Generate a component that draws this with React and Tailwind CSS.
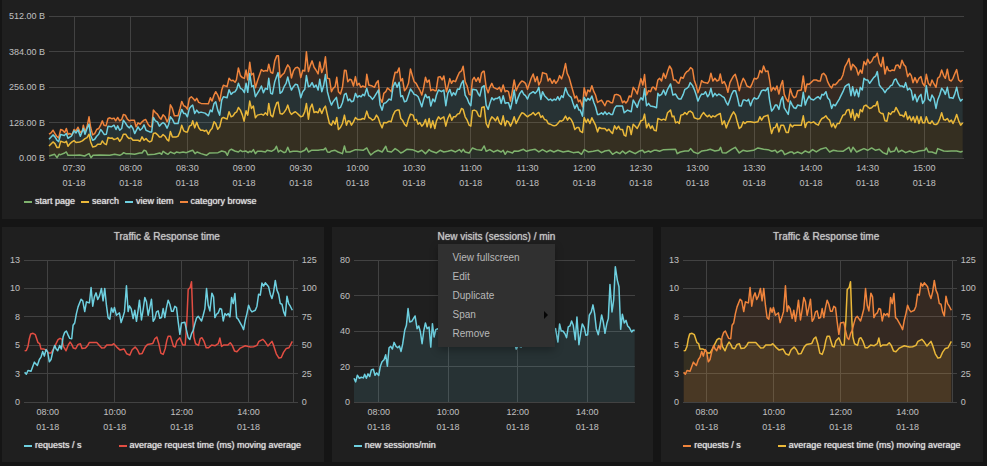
import { useState } from 'react';

const PLOT_HEIGHT = 142;

const COLORS = {
    green: '#7EB26D',
    yellow: '#EAB839',
    cyan: '#6ED0E0',
    orange: '#EF843C',
    red: '#E24D42',
};

// traces come in chunks, each one with its own x origin
const trace = (...chunks) =>
    chunks.flatMap(([origin, points]) =>
        points.trim().split(/\s+/).map((pair) => {
            const [x, y] = pair.split(',').map(Number);
            return [x + origin, y];
        })
    );

const categoryBrowse = trace(
    [0, `148,402 154,398 160,390 166,400 171,408 177,413 183,388 189,390 195,397 200,385 205,402 211,400 217,404 223,388 229,392 235,381 242,397 248,392 251,375 256,395 262,380 268,350 273,382 279,404 285,400 291,388 297,385 303,374 308,362 313,375 319,377 325,355 331,353 337,356 343,354 348,362 354,352 360,362 366,358 371,343 377,345 383,357 389,362 394,360 404,360 409,380 415,368 421,372 427,365 433,360 438,358 445,372 450,378 456,380 461,330 467,337 473,342 479,352 484,357 490,344 496,350 502,365 507,355 512,314 518,325 524,347 535,347 541,325 546,304 552,317 558,320 563,327 569,295 575,290 581,296 586,302 591,295 597,307 604,310 626,311 632,293 637,303 643,285 648,275 654,285 660,303 666,270 671,256 682,260 688,235 694,242 700,241 706,247 710,240 716,204 722,227 728,233 734,235 739,210 744,240 750,187 755,225 761,220 767,263 773,243 779,226 785,209 791,214 797,212 803,213 807,193 813,217 819,220 825,183 831,168 836,168 841,233 847,225 853,220 859,205 864,195 870,203 875,234 881,213 887,204 893,202 898,206 903,233 909,211 915,213 920,156 926,215 931,198 937,183 943,202 949,211 955,222 960,186 966,218 972,202 977,171 983,235 989,236`],
    [990, `5,275 10,265 16,260 21,232 26,275 32,282 38,262 44,211 49,212 54,245 60,238 65,240 71,258 77,230 82,256 88,250 93,262 99,258 107,262 111,223 117,255 125,257 134,262 140,248 145,242 151,295 157,307 162,280 168,275 173,264 178,268 185,275 190,243 196,217 202,218 208,204 213,243 218,236 224,272 230,265 236,250 242,207 248,228 253,245 259,250 264,260 270,270 276,285 281,265 287,232 292,247 298,240 303,272 309,268 315,272 319,272 325,232 331,230 337,240 342,228 350,275 353,265 360,236 365,250 370,242 377,245 383,230 389,217 395,213 400,199 406,245 412,258 418,283 423,285 428,240 433,232 439,244 445,233 450,247 455,220 460,214 463,214 469,262 475,278 480,262 486,250 491,262 497,265 503,268 509,262 514,275 520,255 526,275 531,272 536,275 542,303 548,270 553,240 559,272 564,260 570,250 576,243 581,245 587,250 593,268 599,250 604,235 610,222 616,245 622,230 627,255 633,243 638,218 650,222 655,243 660,235 667,250 673,240 678,250 684,242 689,227 695,237 700,222 707,191 712,220 718,233 724,255 729,272 735,294 740,288 746,305 751,300 758,320 763,263 769,288 774,270 780,275 786,257 792,275 797,285 803,307 809,303 815,300 820,308 825,317 831,303 837,303 843,308 848,308 854,285 860,283 866,285 871,288 878,308 883,303 888,309 893,303 898,288 904,290 910,262 916,270 922,282 927,260 933,236 939,255 944,224 950,285 956,272 962,275 967,262 972,262 978,270`],
    [1971, `3,240 8,235 14,243 20,220 26,235 32,215 38,198 44,208 50,240 56,240 62,248 66,250 72,232 79,235 84,222 90,215 95,212 101,203 107,208 112,240 118,257 123,278 129,262 134,242 140,247 146,248 152,250 157,242 162,220 168,243 174,235 180,243 186,240 190,222 196,250 202,245 208,258 213,277 219,248 224,238 230,228 235,223 241,243 247,272 253,250 259,235 264,243 270,258 280,263 286,250 292,235 298,237 303,233 309,212 315,218 320,198 326,215 333,213 338,240 343,273 349,262 355,270 360,258 366,282 372,255 377,242 382,283 388,297 394,305 400,266 406,285 411,293 417,290 422,272 433,270 439,228 445,275 450,252 456,253 462,248 470,240 478,240 484,243 490,243 495,223 500,220 507,228 512,245 518,257 524,264 529,253 535,254 541,248 547,240 552,238 558,225 564,200 570,190 576,176 582,210 587,193 592,198 598,205 604,225 610,210 615,220 621,185 627,195 632,178 638,190 644,185 650,172 656,170 661,160 667,190 673,200 678,172 684,222 690,200 695,212 701,213 706,210 712,212 717,197 723,195 729,205 735,181 741,195 746,200 752,230 758,220 763,227 768,248 774,233 780,248 786,235 792,230 797,250 803,258 808,223 814,250 820,257 825,240 831,252 837,262 842,235 848,230 854,210 860,227 865,235 871,208 877,240 883,243 888,235 893,222 899,209 905,240 911,245 917,240`]
);

const viewItem = trace(
    [0, `148,417 160,404 166,410 172,420 177,424 183,403 194,406 200,400 205,414 215,408 223,392 229,398 235,389 242,408 251,385 256,402 262,385 268,372 273,405 279,420 285,417 291,408 297,402 303,388 308,394 314,403 320,402 325,378 335,380 343,375 349,388 354,377 360,390 366,385 371,360 377,368 383,378 389,383 394,376 400,385 405,400 415,380 421,390 427,385 433,374 439,390 450,395 456,395 461,352 467,362 473,365 479,378 484,372 490,367 496,372 502,384 507,372 512,350 518,357 524,370 535,370 541,345 546,328 552,340 557,340 563,350 569,325 575,318 579,315 585,340 591,330 597,338 604,336 616,339 626,347 632,330 637,335 643,310 648,305 654,330 660,345 666,300 671,290 682,293 688,269 694,283 700,277 706,275 711,267 716,250 722,265 728,268 734,278 739,250 744,277 750,221 756,260 761,257 767,290 773,280 779,270 785,258 791,278 797,265 803,268 807,235 813,280 818,282 825,245 831,228 835,218 841,280 847,275 853,260 859,250 864,231 870,255 875,270 881,260 887,253 893,254 898,270 903,293 909,275 915,268 920,227 926,260 931,258 937,248 943,262 949,255 955,270 960,238 966,275 972,255 977,224 983,275 989,298`],
    [990, `5,315 10,305 20,292 26,325 32,322 38,308 44,283 49,280 55,302 60,297 65,305 71,303 77,280 83,292 88,287 94,290 99,283 104,287 111,265 117,287 122,290 128,298 134,290 140,280 146,270 151,315 157,330 162,310 168,308 173,303 178,297 184,300 190,260 196,247 202,262 208,247 213,290 218,287 224,305 230,303 236,285 242,267 248,275 253,283 259,285 265,290 270,303 276,320 281,300 287,283 292,293 298,290 303,318 309,297 315,305 320,285 326,270 335,275 342,270 348,317 354,280 360,268 366,287 371,278 377,285 383,267 389,268 395,250 400,242 406,285 412,295 418,310 423,317 428,268 440,270 446,283 450,288 456,262 463,257 469,315 475,328 480,310 486,293 492,300 497,295 503,295 509,290 514,310 520,287 526,310 531,308 536,308 542,327 548,300 553,270 559,310 564,295 570,280 576,272 582,283 587,287 593,297 599,282 610,275 616,280 622,273 627,262 633,298 638,275 644,287 650,293 656,300 662,297 667,302 673,297 678,300 684,290 689,300 695,287 700,292 707,263 713,280 718,287 724,292 729,308 735,325 741,313 747,330 751,330 758,348 763,292 769,303 774,295 780,300 786,288 792,307 797,320 803,343 808,343 815,338 820,343 825,335 831,343 837,338 843,343 848,343 854,325 859,318 870,318 878,318 883,338 893,330 904,335 910,300 916,310 922,322 927,305 933,293 939,300 944,266 950,317 956,310 962,318 973,320 980,323`],
    [1971, `3,280 8,287 14,283 20,270 26,285 32,268 41,252 48,285 56,282 62,293 67,297 72,297 79,283 84,268 90,265 95,260 100,248 107,257 112,268 118,285 123,303 129,290 134,282 140,283 146,275 152,290 157,283 162,265 168,290 174,280 180,287 186,282 191,285 197,290 202,293 208,307 213,315 219,298 224,283 230,272 236,272 241,290 247,317 253,318 259,300 264,300 270,303 275,298 281,317 287,300 292,293 298,297 303,295 309,283 314,272 320,270 326,272 333,263 338,300 344,333 350,325 355,315 360,315 366,328 372,300 377,290 382,323 388,333 394,343 400,303 406,315 411,323 417,325 422,315 433,318 439,277 445,315 450,300 456,288 462,297 470,300 478,293 484,290 490,297 495,283 500,285 507,275 512,293 518,300 524,325 529,313 535,317 541,307 547,297 552,287 558,275 564,260 570,255 576,252 582,287 587,260 593,287 599,268 605,290 610,262 616,270 621,235 627,240 632,240 638,250 643,243 650,233 656,228 661,215 667,255 673,263 678,268 684,278 690,268 695,265 701,257 706,255 712,240 717,237 723,250 729,258 735,258 741,262 746,248 752,270 758,265 763,272 768,300 774,283 780,305 786,290 792,283 797,310 803,300 808,257 814,297 820,303 825,285 831,295 837,325 842,300 848,285 854,265 860,272 865,283 871,262 877,293 883,293 888,295 893,283 899,262 905,290 911,303 917,297`]
);

const search = trace(
    [0, `148,437 160,425 166,430 172,442 178,442 183,423 195,427 200,423 205,438 211,430 217,425 223,421 229,427 240,425 248,422 256,415 262,412 268,402 273,425 279,440 288,438 294,432 303,432 308,422 314,430 320,433 325,412 331,414 337,413 343,418 349,416 354,413 360,423 366,415 371,402 378,402 383,410 388,415 394,413 400,420 415,420 421,423 427,410 433,420 439,415 445,422 450,425 456,422 461,400 467,398 473,403 479,410 484,410 490,403 496,408 502,418 507,422 512,394 518,410 530,410 535,408 541,395 546,375 552,392 558,395 563,395 569,378 575,375 579,362 585,383 591,366 597,383 603,390 609,390 615,393 620,390 626,402 632,390 637,385 643,365 648,370 654,387 660,380 666,355 671,352 682,357 688,335 694,350 700,347 706,338 711,335 716,322 722,330 728,345 733,363 739,332 744,345 750,303 755,325 761,318 767,353 773,345 785,342 791,345 797,338 803,345 807,310 813,345 819,350 825,325 831,308 835,306 841,340 847,342 853,337 859,328 864,315 870,335 875,343 881,338 887,335 893,340 898,345 903,350 909,348 915,335 920,310 926,357 931,325 937,312 943,337 949,335 955,338 960,325 966,340 972,325 977,318 983,345 989,370`],
    [990, `5,375 10,362 16,372 21,352 26,388 32,382 38,370 44,345 50,375 55,362 60,363 65,375 71,365 77,352 83,358 93,358 99,355 104,357 111,333 117,352 123,355 128,360 134,357 140,345 145,352 151,370 157,383 162,367 170,368 178,363 184,365 190,345 196,333 202,330 208,330 213,355 218,360 224,372 230,378 236,357 242,342 250,345 254,360 260,358 265,372 270,367 276,378 281,372 287,358 292,380 298,355 303,383 309,362 315,385 320,362 326,350 332,357 337,353 342,350 348,378 354,355 360,342 366,360 371,350 377,350 383,342 389,340 395,325 400,328 406,350 412,360 418,375 423,378 428,332 433,330 440,333 446,347 452,350 456,322 463,320 469,370 475,382 480,362 486,350 492,355 497,362 503,350 509,368 514,373 520,347 526,377 531,362 536,365 542,378 548,365 553,350 559,370 564,360 570,348 576,338 582,340 587,345 593,350 599,345 604,343 610,337 616,345 622,340 627,337 633,352 638,347 644,358 650,360 655,370 661,372 667,375 673,377 679,375 684,370 690,362 695,363 700,360 707,348 713,360 718,352 724,358 729,368 735,388 741,382 747,382 751,393 758,397 763,352 769,367 774,357 780,370 786,353 792,365 797,375 803,395 808,382 815,385 820,385 825,385 831,392 837,387 843,395 848,400 854,377 860,387 866,378 871,388 878,388 883,405 888,408 893,378 899,380 904,403 910,372 916,378 922,385 927,375 933,362 939,360 944,342 950,383 956,370 962,385 967,377 973,390 979,392`],
    [1971, `3,355 8,357 14,360 20,357 26,360 32,338 41,330 46,350 51,348 56,368 62,365 67,370 72,345 79,343 84,337 90,343 95,335 100,333 107,338 112,353 123,357 129,355 134,345 140,337 146,345 152,350 157,345 163,352 168,347 174,350 180,345 190,340 196,373 202,362 208,383 213,370 219,357 224,345 230,335 236,345 241,365 247,385 253,380 259,365 264,370 270,365 281,365 292,367 303,365 309,350 314,360 320,350 333,345 338,370 344,400 350,383 355,382 360,370 366,395 372,375 380,375 388,397 394,397 400,372 406,380 411,375 422,375 433,375 439,347 445,382 450,368 456,365 462,368 470,365 478,372 484,375 490,362 495,355 500,353 507,347 512,355 518,360 524,380 529,370 535,383 541,370 547,370 552,358 558,345 564,343 570,330 576,328 582,352 587,328 593,360 599,340 605,352 610,328 616,335 621,318 627,315 638,325 644,323 650,317 656,317 661,304 667,335 673,340 678,340 684,362 690,363 695,338 701,343 706,335 712,335 717,322 723,333 729,345 735,345 741,350 746,335 752,358 758,348 763,362 769,350 774,367 780,348 786,370 792,350 797,368 803,368 808,350 814,368 820,370 825,362 831,372 837,373 842,370 848,357 854,338 860,358 865,360 871,355 877,365 883,360 888,370 893,360 899,343 905,362 911,375 917,368`]
);

const startPage = trace(
    [0, `148,467 165,462 172,472 178,462 183,463 195,458 200,455 205,465 225,465 240,464 255,467 262,463 268,460 274,472 280,465 300,464 330,465 345,462 360,465 366,462 372,457 378,460 390,460 405,462 420,458 427,458 433,450 439,452 444,463 465,462 480,458 486,462 490,453 497,458 505,462 512,455 524,460 530,455 540,457 550,455 560,457 570,453 579,450 586,460 592,455 604,460 620,465 630,458 655,457 666,452 677,455 683,465 689,450 695,447 705,452 716,455 722,450 728,454 738,452 745,457 750,453 755,455 761,448 767,460 773,453 785,453 797,455 802,450 815,453 825,447 830,438 836,455 842,450 853,457 858,455 864,441 870,455 880,453 892,453 903,455 915,450 920,443 926,455 935,450 945,450 955,450 966,448 972,448 977,443 983,455 989,456`],
    [990, `5,452 16,450 25,455 38,460 44,437 49,455 60,455 77,448 100,450 111,443 117,455 123,464 134,455 145,450 157,455 168,438 173,453 185,455 196,445 204,450 213,458 220,455 231,447 248,448 265,455 276,450 287,460 298,448 303,452 320,458 331,450 342,455 354,453 365,450 377,455 389,448 395,455 400,447 406,455 418,458 428,443 440,448 455,450 463,437 469,453 480,448 491,455 503,450 514,455 520,450 526,462 532,453 548,458 553,452 565,453 581,447 590,453 600,450 616,447 627,455 638,448 650,455 661,450 672,455 684,450 700,455 715,452 730,457 745,455 755,462 763,448 775,455 790,453 805,450 815,457 825,452 838,450 848,462 860,455 870,460 878,452 887,460 899,452 916,460 927,453 938,450 944,457 956,452 962,455 972,450 979,450`],
    [1971, `8,453 20,448 56,447 61,460 70,455 84,452 95,452 101,445 110,455 123,460 135,452 150,450 160,447 174,452 186,450 191,441 196,457 208,458 224,447 235,441 247,458 258,450 270,453 290,450 303,443 320,447 333,448 345,453 355,450 361,457 372,450 377,452 383,463 400,455 406,455 411,460 422,455 434,460 445,452 456,457 467,448 478,455 490,447 507,442 518,455 529,450 541,452 558,453 576,441 582,455 588,441 599,455 610,450 621,445 632,450 644,443 656,450 667,447 678,457 690,462 695,443 700,455 713,452 718,441 724,455 735,450 746,457 758,452 770,457 786,452 803,450 808,443 814,455 825,455 837,460 842,445 860,452 871,453 883,452 899,452 911,455 917,453`]
);

const requests = trace([0, `74,455 79,461 84,450 93,452 103,425 112,435 118,417 123,410 128,393 133,407 138,387 143,395 148,424 153,417 158,395 164,375 168,385 173,391 179,375 184,386 189,350 194,336 199,332 205,346 209,354 215,355 219,315 224,308 229,280 234,260 243,237 248,242 254,274 259,245 264,247 268,248 273,202 278,258 283,230 288,218 293,238 298,228 304,205 309,242 314,205 319,255 324,292 329,297 334,263 339,276 343,262 349,285 358,278 363,307 368,292 373,275 379,197 384,274 388,257 393,265 399,295 404,270 409,303 414,270 418,240 424,299 429,268 434,232 439,245 444,285 449,262 454,237 459,303 464,295 469,275 474,272 479,294 484,292 489,265 494,292 499,262 504,240 509,252 514,273 519,273 524,258 529,262 534,305 539,342 544,308 554,306 559,330 564,352 569,357 574,340 579,330 584,310 589,293 594,288 599,295 604,302 609,285 614,265 619,205 624,255 629,272 635,219 640,230 644,292 649,282 654,278 659,265 664,267 669,302 674,280 679,285 684,280 689,290 694,232 699,250 704,220 709,292 714,297 724,315 730,328 735,300 740,280 745,255 750,268 755,275 765,270 770,258 775,222 780,225 785,189 790,198 795,188 805,200 810,222 815,235 820,215 825,181 830,210 835,222 840,250 845,252 850,275 855,287 860,228 865,250 870,258 876,270`]);

const requestTime = trace([0, `74,391 79,390 84,378 88,355 92,341 99,339 106,343 110,355 114,367 119,370 123,386 132,386 140,390 145,398 153,398 160,385 167,372 174,358 180,354 186,357 190,378 198,391 204,375 210,365 215,372 220,383 227,385 234,372 241,370 246,384 256,383 263,375 268,366 290,366 298,375 305,383 313,382 320,374 335,374 341,370 350,380 360,389 372,386 380,400 389,404 396,388 405,380 412,388 418,401 426,399 435,380 442,372 458,369 464,355 470,350 476,370 482,398 489,402 495,385 500,360 504,348 511,348 516,365 520,378 525,380 530,362 539,352 543,362 548,374 555,374 560,300 564,208 570,202 574,185 578,300 581,350 586,370 595,375 600,355 605,352 611,362 618,382 625,382 634,374 645,376 654,370 659,353 664,378 670,374 683,374 690,367 696,375 703,392 710,394 720,383 735,376 750,380 760,379 770,375 776,363 788,357 795,365 803,377 815,363 820,375 828,400 836,413 843,411 850,395 858,384 866,382 876,363`]);

const newSessions = trace([0, `76,473 81,484 86,464 92,473 98,470 104,472 108,461 113,473 118,460 123,468 128,448 134,446 139,464 144,457 150,465 155,437 160,424 166,418 171,403 176,437 181,382 186,378 191,386 196,366 202,378 207,382 212,377 217,393 222,370 228,330 233,315 238,265 243,305 249,303 254,295 259,287 265,325 270,317 275,335 280,370 285,332 290,308 295,325 301,320 306,380 311,310 316,350 321,328 327,325 340,340 390,325 450,335 500,320 540,345 556,365 562,386 568,376 577,380 585,360 620,340 660,345 680,325 687,365 692,311 697,332 702,332 708,340 713,352 718,320 723,317 728,302 733,315 739,358 744,290 750,373 755,340 760,311 766,322 771,345 776,343 781,285 787,275 792,254 797,280 802,325 808,343 813,315 818,284 823,305 828,339 834,308 838,295 843,193 849,275 854,240 859,140 865,180 870,200 875,327 880,282 886,308 891,300 896,317 901,322 908,335 912,330 917,330`]);

const overview = {
    box: { x: 148, y: 49, w: 2744, h: 424 },
    ticks: ['07:30', '08:00', '08:30', '09:00', '09:30', '10:00', '10:30', '11:00', '11:30', '12:00', '12:30', '13:00', '13:30', '14:00', '14:30', '15:00']
        .map((label, i) => ({ label, x: 223 + i * 170 })),
    left: ['512.00 B', '384.00 B', '256.00 B', '128.00 B', '0.00 B'],
    series: [
        { name: 'start page', color: COLORS.green, points: startPage, fill: true },
        { name: 'search', color: COLORS.yellow, points: search, base: startPage, fill: true },
        { name: 'view item', color: COLORS.cyan, points: viewItem, base: search, fill: true },
        { name: 'category browse', color: COLORS.orange, points: categoryBrowse, base: viewItem, fill: true },
    ],
};

const traffic = (first, second, fill) => ({
    box: { x: 72, y: 120, w: 820, h: 424 },
    ticks: [{ label: '08:00', x: 143 }, { label: '10:00', x: 344 }, { label: '12:00', x: 545 }, { label: '14:00', x: 745 }],
    edge: 881,
    left: ['13', '10', '8', '5', '3', '0'],
    right: ['125', '100', '75', '50', '25', '0'],
    series: [
        { name: 'requests / s', color: first, points: requests, fill },
        { name: 'average request time (ms) moving average', color: second, points: requestTime, fill },
    ],
});

const visits = {
    box: { x: 76, y: 120, w: 841, h: 424 },
    ticks: [{ label: '08:00', x: 150 }, { label: '10:00', x: 358 }, { label: '12:00', x: 567 }, { label: '14:00', x: 775 }],
    left: ['80', '60', '40', '20', '0'],
    series: [{ name: 'new sessions/min', color: COLORS.cyan, points: newSessions, fill: true }],
};

const Chart = ({ data }) => {
    const { box, ticks, left, right, edge, series } = data;
    const percent = (x) => `${((x - box.x) / box.w) * 100}%`;
    const bottom = box.y + box.h;

    const areaOf = ({ points, base }) => {
        const floor = base
            ? [...base].reverse()
            : [[points[points.length - 1][0], bottom], [points[0][0], bottom]];
        return [...points, ...floor].join(' ');
    };

    return (
        <svg className="block w-full h-[142px] overflow-visible text-[9px] fill-[#c0c0c0]">
            <g stroke="#424242" shapeRendering="crispEdges">
                {left.map((label, i) => {
                    const y = (i / (left.length - 1)) * PLOT_HEIGHT;
                    return <line key={label} x1="0" x2="100%" y1={y} y2={y} />;
                })}
                {ticks.map(({ label, x }) => (
                    <line key={label} x1={percent(x)} x2={percent(x)} y1="0" y2={PLOT_HEIGHT} />
                ))}
                {edge && <line x1={percent(edge)} x2={percent(edge)} y1="0" y2={PLOT_HEIGHT} />}
            </g>
            <svg width="100%" height={PLOT_HEIGHT} viewBox={`${box.x} ${box.y} ${box.w} ${box.h}`} preserveAspectRatio="none" overflow="visible">
                {series.filter((s) => s.fill).map((s) => (
                    <polygon key={s.name} points={areaOf(s)} fill={s.color} fillOpacity="0.11" />
                ))}
                {[...series].reverse().map((s) => (
                    <polyline key={s.name} points={s.points.join(' ')} fill="none" stroke={s.color} strokeWidth="1.5" strokeLinejoin="round" vectorEffect="non-scaling-stroke" />
                ))}
            </svg>
            {left.map((label, i) => (
                <text key={label} x="-4" y={(i / (left.length - 1)) * PLOT_HEIGHT + 3} textAnchor="end">{label}</text>
            ))}
            {right && (
                <svg x="100%" overflow="visible">
                    {right.map((label, i) => (
                        <text key={label} x="4" y={(i / (right.length - 1)) * PLOT_HEIGHT + 3}>{label}</text>
                    ))}
                </svg>
            )}
            {ticks.map(({ label, x }) => (
                <g key={label} textAnchor="middle">
                    <text x={percent(x)} y={PLOT_HEIGHT + 13}>{label}</text>
                    <text x={percent(x)} y={PLOT_HEIGHT + 28}>01-18</text>
                </g>
            ))}
        </svg>
    );
};

const Legend = ({ series, wide }) => (
    <div className={`mt-[37px] flex pl-[22px] ${wide ? 'gap-[37px]' : 'gap-[6px]'}`}>
        {series.map((s) => (
            <button key={s.name} type="button" className="flex items-center gap-[3px] whitespace-nowrap text-[9px] leading-3 text-[#e0e0e0] [text-shadow:0_0_1px_#e0e0e0]">
                <svg className="mt-px h-[2px] w-2" aria-hidden="true">
                    <rect width="8" height="2" fill={s.color} />
                </svg>
                {s.name}
            </button>
        ))}
    </div>
);

const MENU_ITEMS = ['View fullscreen', 'Edit', 'Duplicate', 'Span', 'Remove'];

const PanelMenu = () => (
    <div className="absolute left-0 top-full z-10 w-[117px] bg-[#303030] py-1 shadow-[0_3px_8px_rgba(0,0,0,0.3)]">
        {MENU_ITEMS.map((item) => (
            <button key={item} type="button" className="flex h-[19px] w-full items-center justify-between pl-[15px] pr-[7px] text-[10px] text-[#b8b8b8] hover:bg-[#3a3a3a]">
                {item}
                {item === 'Span' && (
                    <svg className="h-2 w-1" viewBox="0 0 4 8" aria-hidden="true">
                        <path d="M0 0l4 4-4 4z" fill="#050505" />
                    </svg>
                )}
            </button>
        ))}
    </div>
);

const Panel = ({ title, data, plotClass, menu }) => {
    const [open, setOpen] = useState(Boolean(menu));

    return (
        <section className="min-w-0 bg-[#1f1f1f] pb-[11px]">
            <div className="flex h-[33px] justify-center pl-2 pt-[3px]">
                <div className="relative h-[14px]">
                    <button type="button" onClick={() => setOpen(!open)} className="block text-[10px] leading-[14px] text-[#c4c4c4] [text-shadow:0_0_1px_#c4c4c4]">
                        {title}
                    </button>
                    {open && <PanelMenu />}
                </div>
            </div>
            <div className={plotClass}>
                <Chart data={data} />
            </div>
            <Legend series={data.series} wide />
        </section>
    );
};

export default function App() {
    return (
        <main className="min-h-screen bg-[#151515] pl-0.5 pr-1 font-['Liberation_Sans',Arial,sans-serif]">
            <section className="bg-[#1f1f1f] pb-3 pt-4">
                <div className="pl-[47px] pr-[19px]">
                    <Chart data={overview} />
                </div>
                <Legend series={overview.series} />
            </section>
            <div className="mt-2 grid grid-cols-3 gap-2">
                <Panel title="Traffic & Response time" data={traffic(COLORS.cyan, COLORS.red, false)} plotClass="pl-[22px] pr-[26px]" />
                <Panel title="New visits (sessions) / min" data={visits} plotClass="pl-[22px] pr-[19px]" menu />
                <Panel title="Traffic & Response time" data={traffic(COLORS.orange, COLORS.yellow, true)} plotClass="pl-[22px] pr-[26px]" />
            </div>
        </main>
    );
}
